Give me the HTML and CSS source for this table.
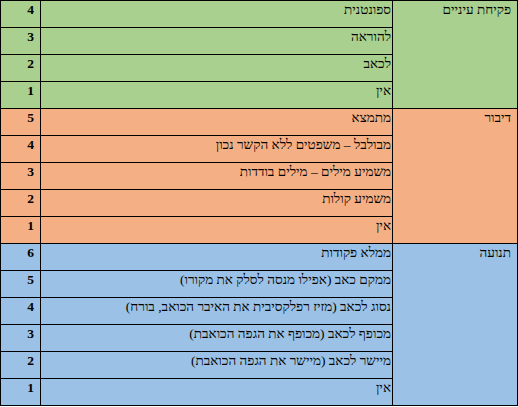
FILE: index.html
```html
<!DOCTYPE html>
<html lang="he" dir="rtl">
<head>
    <meta charset="UTF-8">
    <meta name="viewport" content="width=device-width, initial-scale=1.0">
    <title>סולם גלזגו</title>
    <link rel="stylesheet" href="styles.css">
</head>

<body>
    <table class="scale">
        <colgroup>
            <col class="col-group">
            <col class="col-desc">
            <col class="col-score">
        </colgroup>
        <tbody class="eyes">
            <tr>
                <td class="group" rowspan="4">פקיחת עיניים</td>
                <td>ספונטנית</td>
                <td class="score">4</td>
            </tr>
            <tr><td>להוראה</td><td class="score">3</td></tr>
            <tr><td>לכאב</td><td class="score">2</td></tr>
            <tr><td>אין</td><td class="score">1</td></tr>
        </tbody>
        <tbody class="speech">
            <tr>
                <td class="group" rowspan="5">דיבור</td>
                <td>מתמצא</td>
                <td class="score">5</td>
            </tr>
            <tr><td>מבולבל – משפטים ללא הקשר נכון</td><td class="score">4</td></tr>
            <tr><td>משמיע מילים – מילים בודדות</td><td class="score">3</td></tr>
            <tr><td>משמיע קולות</td><td class="score">2</td></tr>
            <tr><td>אין</td><td class="score">1</td></tr>
        </tbody>
        <tbody class="motor">
            <tr>
                <td class="group" rowspan="6">תנועה</td>
                <td>ממלא פקודות</td>
                <td class="score">6</td>
            </tr>
            <tr><td>ממקם כאב (אפילו מנסה לסלק את מקורו)</td><td class="score">5</td></tr>
            <tr><td>נסוג לכאב (מזיז רפלקסיבית את האיבר הכואב, בורח)</td><td class="score">4</td></tr>
            <tr><td>מכופף לכאב (מכופף את הגפה הכואבת)</td><td class="score">3</td></tr>
            <tr><td>מיישר לכאב (מיישר את הגפה הכואבת)</td><td class="score">2</td></tr>
            <tr><td>אין</td><td class="score">1</td></tr>
        </tbody>
    </table>
</body>

</html>
```

FILE: styles.css
```css
* {
    margin: 0;
    padding: 0;
}

body {
    background: #fff;
    font-family: "Liberation Serif", "DejaVu Serif", serif;
    font-size: 13.5px;
    color: #000;
}

.scale {
    width: 517px;
    table-layout: fixed;
    border-collapse: collapse;
    direction: rtl;
}

.col-group {
    width: 125px;
}

.col-desc {
    width: 352px;
}

.col-score {
    width: 40px;
}

.scale tr {
    height: 27px;
}

.scale td {
    border: 1px solid #000;
    vertical-align: top;
    text-align: right;
    padding: 1px 1px 0 2px;
    white-space: nowrap;
    line-height: 15px;
}

.scale td.group {
    padding-right: 6px;
}

.scale td.score {
    padding-right: 6px;
    font-weight: bold;
    direction: ltr;
}

.eyes td {
    background-color: #a9d08e;
}

.speech td {
    background-color: #f4b084;
}

.motor td {
    background-color: #9bc2e6;
}
```
